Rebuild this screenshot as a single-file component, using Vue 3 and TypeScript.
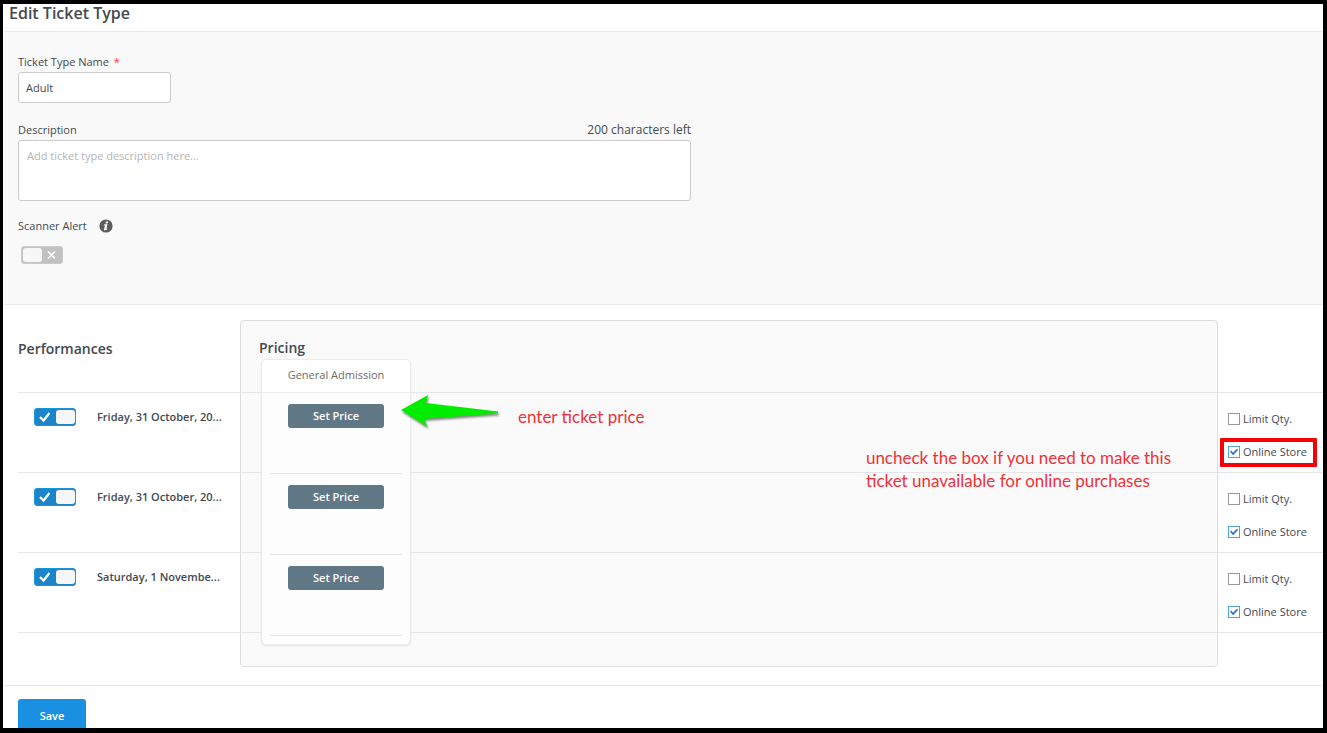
<script setup lang="ts">
import { computed, reactive, ref } from 'vue'

interface Performance {
  id: number
  name: string
  active: boolean
  limitQty: boolean
  onlineStore: boolean
  highlighted: boolean
}

const MAX_LENGTH = 200
const ticketName = ref('Adult')
const description = ref('')
const scannerAlert = ref(false)
const charactersLeft = computed(() => MAX_LENGTH - description.value.length)

const performances = reactive<Performance[]>([
  { id: 1, name: 'Friday, 31 October, 20...', active: true, limitQty: false, onlineStore: true, highlighted: true },
  { id: 2, name: 'Friday, 31 October, 20...', active: true, limitQty: false, onlineStore: true, highlighted: false },
  { id: 3, name: 'Saturday, 1 Novembe...', active: true, limitQty: false, onlineStore: true, highlighted: false },
])
</script>

<template>
  <main class="page">
    <header class="page-header">
      <h1>Edit Ticket Type</h1>
    </header>

    <section class="details">
      <div class="field">
        <label for="ticket-name">Ticket Type Name <span class="required">*</span></label>
        <input id="ticket-name" v-model="ticketName" class="text-box" type="text" />
      </div>

      <div class="field description">
        <div class="label-row">
          <label for="description">Description</label>
          <span class="counter">{{ charactersLeft }} characters left</span>
        </div>
        <textarea
          id="description"
          v-model="description"
          class="text-box text-area"
          :maxlength="MAX_LENGTH"
          placeholder="Add ticket type description here..."
        ></textarea>
      </div>

      <div class="field">
        <div class="alert-label">
          <label for="scanner-alert">Scanner Alert</label>
          <svg class="info" viewBox="0 0 14 14" aria-hidden="true">
            <circle cx="7" cy="7" r="6.6" fill="#5c5c5c" />
            <path d="M6.9 2.6 9.2 2.4 8.8 4.3 6.6 4.5z" fill="#fff" />
            <path d="M5 5.5 8.5 5.1 7.4 9.8 8.4 9.5 8.2 10.6 5.2 11.5 4.9 10.9 6 6.5 4.8 6.6z" fill="#fff" />
          </svg>
        </div>
        <span class="toggle scanner-toggle">
          <input id="scanner-alert" v-model="scannerAlert" type="checkbox" role="switch" />
          <span class="knob"></span>
          <svg class="toggle-mark" viewBox="0 0 20 14" aria-hidden="true">
            <path v-if="scannerAlert" d="M4 7 L7.5 10.5 L13.5 3" />
            <path v-else class="cross" d="M6 3.5 13 10.5M13 3.5 6 10.5" />
          </svg>
        </span>
      </div>
    </section>

    <section class="schedule">
      <div class="column performances">
        <h2>Performances</h2>
        <div v-for="p in performances" :key="p.id" class="row">
          <label class="performance">
            <span class="toggle">
              <input v-model="p.active" type="checkbox" role="switch" />
              <span class="knob"></span>
              <svg class="toggle-mark" viewBox="0 0 20 14" aria-hidden="true">
                <path v-if="p.active" d="M4 7 L7.5 10.5 L13.5 3" />
                <path v-else class="cross" d="M6 3.5 13 10.5M13 3.5 6 10.5" />
              </svg>
            </span>
            <span class="performance-name">{{ p.name }}</span>
          </label>
        </div>
      </div>

      <div class="panel">
        <div class="panel-lines">
          <div v-for="p in performances" :key="p.id" class="row"></div>
        </div>
        <div class="panel-content">
          <h2>Pricing</h2>
          <div class="card">
            <h3>General Admission</h3>
            <div v-for="p in performances" :key="p.id" class="price-row">
              <button type="button" class="price-button">Set Price</button>
            </div>
          </div>
        </div>

        <svg class="arrow" viewBox="0 0 102 40" aria-hidden="true">
          <path d="M1 17 28 2 26 10 98 18.5 98 20.5 24 26 27.500 34z" />
        </svg>
        <p class="note price-note">enter ticket price</p>
        <p class="note store-note">uncheck the box if you need to make this<br />ticket unavailable for online purchases</p>
      </div>

      <div class="column options">
        <div v-for="p in performances" :key="p.id" class="row option-row">
          <label class="option">
            <input v-model="p.limitQty" type="checkbox" />
            <span>Limit Qty.</span>
          </label>
          <label class="option" :class="{ highlighted: p.highlighted }">
            <input v-model="p.onlineStore" type="checkbox" />
            <span>Online Store</span>
          </label>
        </div>
      </div>
    </section>

    <footer class="page-footer">
      <button type="button" class="save-button">Save</button>
    </footer>
  </main>
</template>

<style>
body {
  margin: 0;
}
</style>

<style scoped>
* {
  box-sizing: border-box;
}

.page {
  height: 100vh;
  overflow: hidden;
  border: solid #000;
  border-width: 4px 4px 5px 3px;
  background: #fff;
  color: #43494f;
  font: 11px/16px "Open Sans", "Noto Sans", sans-serif;
}

h1,
h2,
h3,
p {
  margin: 0;
}

.page-header {
  padding: 0 6px 9px;
  border-bottom: 1px solid #ebebeb;
}

h1 {
  font-size: 16px;
  font-weight: 600;
  line-height: 18px;
}

h2 {
  font-size: 14px;
  font-weight: 600;
  line-height: 20px;
}

.details {
  display: flex;
  flex-direction: column;
  gap: 17px;
  padding: 22px 15px 40px;
  border-bottom: 1px solid #ebebeb;
  background: #f9f9f9;
}

.field {
  display: flex;
  flex-direction: column;
  align-items: flex-start;
  gap: 2px;
}

.description {
  max-width: 673px;
  margin-top: 2px;
  align-items: stretch;
}

.required {
  color: #f33;
  margin-left: 2px;
}

.label-row {
  display: flex;
  justify-content: space-between;
}

.counter {
  font-size: 12px;
}

.text-box {
  width: 153px;
  height: 31px;
  padding: 0 7px;
  border: 1px solid #ccc;
  border-radius: 3px;
  background: #fff;
  color: inherit;
  font: inherit;
}

.text-area {
  display: block;
  width: 100%;
  height: 61px;
  padding: 7px 8px;
  resize: none;
}

.text-area::placeholder {
  color: #b5b5b5;
}

.alert-label {
  display: flex;
  align-items: center;
  gap: 12px;
}

.info {
  width: 14px;
  height: 14px;
}

.toggle {
  position: relative;
  display: flex;
  align-items: center;
  flex: none;
  width: 42px;
  height: 18px;
  padding: 0 1px 0 2px;
}

.toggle input {
  position: absolute;
  inset: 0;
  width: 100%;
  height: 100%;
  margin: 0;
  appearance: none;
  border: 1px solid #cbcbcb;
  border-radius: 3px;
  background: #c1c1c1;
}

.toggle input:checked {
  border-color: #1a93dc;
  background: #1a86c9;
}

.knob {
  position: relative;
  width: 19px;
  height: 14px;
  border-radius: 3px;
  background: #f7f7f7;
  pointer-events: none;
}

.toggle-mark {
  position: relative;
  width: 20px;
  height: 14px;
  fill: none;
  stroke: #fff;
  stroke-width: 2.2;
  pointer-events: none;
}

.toggle-mark .cross {
  stroke-width: 1.6;
}

.toggle input:checked ~ .knob {
  order: 1;
}

.scanner-toggle {
  margin: 10px 3px 0;
}

.schedule {
  display: grid;
  grid-template-columns: 222px 1fr 105px;
  padding: 15px 0 18px 15px;
}

.row {
  height: 80px;
  border-top: 1px solid #e6e6e6;
}

.row:last-child {
  height: 81px;
  border-bottom: 1px solid #e6e6e6;
}

.column {
  padding-top: 72px;
}

.performances {
  padding-top: 0;
}

.performances h2 {
  padding: 19px 0 33px;
}

.performance {
  display: flex;
  align-items: center;
  gap: 21px;
  padding: 15px 0 0 16px;
  font-weight: 600;
}

.performance-name {
  white-space: nowrap;
}

.panel {
  position: relative;
  display: grid;
  height: 347px;
  border: 1px solid #ddd;
  border-radius: 4px;
  background: #fafafa;
}

.panel-lines,
.panel-content {
  grid-area: 1 / 1;
}

.panel-lines {
  padding-top: 71px;
}

.panel-content {
  padding: 17px 18px;
}

.card {
  width: 150px;
  margin: 1px 2px;
  border: 1px solid #ebebeb;
  border-radius: 5px;
  background: #fdfdfd;
  box-shadow: 0 1px 2px #e4e4e4;
}

.card h3 {
  padding: 7px 0 9px;
  border-bottom: 1px solid #ebebeb;
  border-radius: 5px 5px 0 0;
  background: #fff;
  color: #6c6c6c;
  font-size: 11px;
  font-weight: 400;
  text-align: center;
}

.price-row {
  height: 81px;
  margin: 0 8px;
  padding-top: 11px;
  border-bottom: 1px solid #e9e9e9;
  text-align: center;
}

.price-row:last-child {
  margin-bottom: 8px;
}

.price-button {
  width: 96px;
  height: 24px;
  padding: 0;
  border: 0;
  border-radius: 3px;
  background: #607785;
  color: #fff;
  font: inherit;
  font-weight: 600;
}

.arrow {
  position: absolute;
  top: 72px;
  left: 159px;
  width: 102px;
  height: 40px;
  fill: #00ec00;
  filter: drop-shadow(1px 2px 1px #0007);
}

.note {
  position: absolute;
  color: #ee3138;
  font: 17px/23px Lato, "Open Sans", sans-serif;
  white-space: nowrap;
}

.price-note {
  top: 84px;
  left: 277px;
}

.store-note {
  top: 125px;
  right: 46px;
}

.option-row {
  display: flex;
  flex-direction: column;
  align-items: flex-start;
  gap: 17px;
  padding: 18px 0 0 10px;
}

.option {
  position: relative;
  display: flex;
  align-items: center;
  gap: 3px;
  white-space: nowrap;
}

.option input {
  display: grid;
  place-items: center;
  width: 12px;
  height: 12px;
  margin: 0;
  appearance: none;
  border: 1px solid #999;
  background: #fff;
}

.option input:checked {
  border-color: #579fd8;
}

.option input:checked::before {
  content: "";
  width: 8px;
  height: 8px;
  background: #1874c4;
  clip-path: polygon(0 45%, 14% 32%, 38% 58%, 86% 8%, 100% 24%, 38% 90%);
}

.highlighted::after {
  content: "";
  position: absolute;
  inset: -6px -10px -7px -8px;
  border: 4px solid #fa0007;
  border-radius: 1px;
  pointer-events: none;
}

.page-footer {
  padding: 13px 15px;
  border-top: 1px solid #ebebeb;
}

.save-button {
  width: 68px;
  height: 34px;
  padding: 0;
  border: 0;
  border-radius: 3px;
  background: #1990e1;
  color: #fff;
  font: inherit;
  font-weight: 600;
}
</style>
